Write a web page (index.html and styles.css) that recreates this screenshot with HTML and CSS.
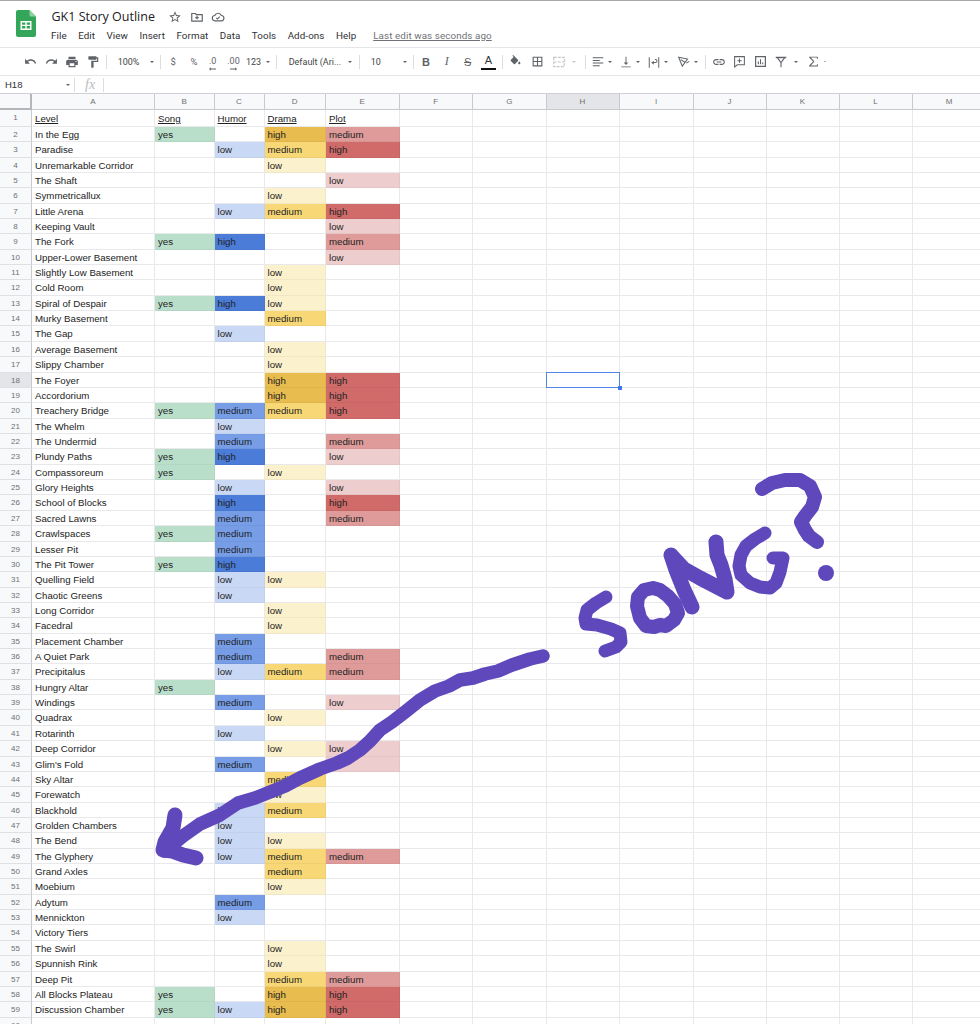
FILE: index.html
```html
<!DOCTYPE html>
<html>
<head>
	<meta charset="UTF-8">
	<title>GK1 Story Outline</title>
	<link rel="stylesheet" href="styles.css">
</head>
<body>
	<div class="page">
		<header class="title-bar">
			<svg class="logo" width="20" height="27" viewBox="0 0 20 27">
				<path d="M2 0h11.500l6.500 6.500v18.500a2 2 0 0 1-2 2h-16a2 2 0 0 1-2-2v-23a2 2 0 0 1 2-2z" fill="#34a65a"/>
				<path d="M13.500 0l6.500 6.500h-5a1.500 1.500 0 0 1-1.500-1.500z" fill="#8fd0a5"/>
				<path d="M4.500 11h11v9h-11zM6 12.500v2.200h3.300v-2.200zM10.700 12.500v2.200h3.300v-2.200zM6 16.100v2.400h3.300v-2.400zM10.700 16.100v2.400h3.300v-2.400z" fill="#fff" fill-rule="evenodd"/>
			</svg>
			<div class="title-main">
				<div class="title-row">
					<span class="doc-title">GK1 Story Outline</span>
					<svg class="title-icon" width="14" height="14" viewBox="0 0 24 24"><path fill="#5f6368" d="M22 9.240l-7.190-.62L12 2 9.190 8.630 2 9.240l5.460 4.730L5.820 21 12 17.270 18.180 21l-1.630-7.030L22 9.240zM12 15.400l-3.760 2.270 1-4.280-3.320-2.880 4.380-.38L12 6.100l1.710 4.040 4.380.38-3.320 2.880 1 4.280L12 15.400z"/></svg>
					<svg class="title-icon" width="14" height="14" viewBox="0 0 24 24"><path fill="none" stroke="#5f6368" stroke-width="2" d="M3 6h6l2 2h10v11h-18zM12 10v6M9 13h6"/></svg>
					<svg class="title-icon" width="14" height="14" viewBox="0 0 24 24"><path fill="none" stroke="#5f6368" stroke-width="2" d="M7 18.500a4.500 4.500 0 0 1-.5-9 6 6 0 0 1 11.300 0 4.500 4.500 0 0 1-.3 9zM9 13.500l2 2 4-4"/></svg>
				</div>
				<nav class="menu-row">
					<span>File</span>
					<span>Edit</span>
					<span>View</span>
					<span>Insert</span>
					<span>Format</span>
					<span>Data</span>
					<span>Tools</span>
					<span>Add-ons</span>
					<span>Help</span>
					<a class="last-edit">Last edit was seconds ago</a>
				</nav>
			</div>
		</header>

		<div class="toolbar">
			<button class="tb"><svg width="13" height="13" viewBox="0 0 24 24"><path d="M12.500 8c-2.650 0-5.050.99-6.900 2.600L2 7v9h9l-3.620-3.620c1.390-1.160 3.160-1.880 5.120-1.880 3.540 0 6.550 2.310 7.600 5.500l2.370-.78C21.080 11.030 17.150 8 12.500 8z"/></svg></button>
			<button class="tb"><svg width="13" height="13" viewBox="0 0 24 24"><path d="M18.400 10.600C16.550 8.990 14.150 8 11.500 8c-4.650 0-8.580 3.030-9.960 7.220L3.900 16c1.050-3.190 4.050-5.500 7.600-5.500 1.950 0 3.730.72 5.120 1.880L13 16h9V7l-3.600 3.600z"/></svg></button>
			<button class="tb"><svg width="14" height="14" viewBox="0 0 24 24"><path d="M19 8H5c-1.660 0-3 1.340-3 3v6h4v4h12v-4h4v-6c0-1.660-1.340-3-3-3zm-3 11H8v-5h8v5zm3-7c-.55 0-1-.45-1-1s.45-1 1-1 1 .45 1 1-.45 1-1 1zm-1-9H6v4h12V3z"/></svg></button>
			<button class="tb"><svg width="14" height="14" viewBox="0 0 24 24"><path d="M18 4V3c0-.55-.45-1-1-1H5c-.55 0-1 .45-1 1v4c0 .55.45 1 1 1h12c.55 0 1-.45 1-1V6h1v4H9v11c0 .55.45 1 1 1h2c.55 0 1-.45 1-1v-9h8V4h-3z"/></svg></button>
			<i class="sep sep-1"></i>
			<div class="drop drop-zoom"><span>100%</span><i class="caret"></i></div>
			<i class="sep"></i>
			<button class="tb tb-first tb-text">$</button>
			<button class="tb tb-text">%</button>
			<button class="tb tb-text tb-dec">.0<svg width="7" height="4" viewBox="0 0 8 4"><path d="M0 2l2-2v1.500h6v1h-6v1.500z"/></svg></button>
			<button class="tb tb-text tb-dec">.00<svg width="7" height="4" viewBox="0 0 8 4"><path d="M8 2l-2-2v1.500h-6v1h6v1.500z"/></svg></button>
			<div class="drop drop-num"><span>123</span><i class="caret"></i></div>
			<i class="sep"></i>
			<div class="drop drop-font"><span>Default (Ari...</span><i class="caret"></i></div>
			<i class="sep"></i>
			<div class="drop drop-size"><span>10</span><i class="caret"></i></div>
			<i class="sep"></i>
			<button class="tb tb-first tb-letter tb-bold">B</button>
			<button class="tb tb-letter tb-italic">I</button>
			<button class="tb tb-letter tb-strike">S</button>
			<button class="tb tb-letter tb-color">A</button>
			<i class="sep sep-2"></i>
			<button class="tb tb-first"><svg width="13" height="13" viewBox="0 0 24 24"><path d="M16.560 8.940L7.620 0 6.210 1.410l2.380 2.380-5.150 5.150c-.59.59-.59 1.540 0 2.120l5.500 5.500c.29.29.68.44 1.060.44s.77-.15 1.060-.44l5.500-5.500c.59-.58.59-1.530 0-2.120zM19 11.500s-2 2.170-2 3.500c0 1.100.9 2 2 2s2-.9 2-2c0-1.330-2-3.500-2-3.500z"/></svg></button>
			<button class="tb tb-borders"><svg width="13" height="13" viewBox="0 0 24 24"><path d="M3 3v18h18V3H3zm8 16H5v-6h6v6zm0-8H5V5h6v6zm8 8h-6v-6h6v6zm0-8h-6V5h6v6z"/></svg></button>
			<button class="tb tb-merge"><svg width="14" height="14" viewBox="0 0 24 24"><path fill="none" stroke="#c4c6c9" stroke-width="2" stroke-dasharray="5 2" d="M3 4h18v16h-18zM3 12h18"/></svg><i class="caret caret-off"></i></button>
			<i class="sep"></i>
			<button class="tb tb-caret tb-align"><svg width="14" height="14" viewBox="0 0 24 24"><path d="M3 4h18v1.600h-18zM3 8.500h12v1.600h-12zM3 13h18v1.600h-18zM3 17.500h12v1.600h-12z"/></svg><i class="caret"></i></button>
			<button class="tb tb-caret"><svg width="14" height="14" viewBox="0 0 24 24"><path d="M4 19.500h16v1.600h-16zM11.200 3h1.600v10h3.200l-4 4-4-4h3.200z"/></svg><i class="caret"></i></button>
			<button class="tb tb-caret"><svg width="14" height="14" viewBox="0 0 24 24"><path d="M3 3h1.700v18h-1.700zM19.300 3h1.700v18h-1.700zM8 11.200h6.500a1.800 1.800 0 0 0 0-3.600h-1v-1.700h1a3.500 3.500 0 0 1 0 7h-6.500zM11.500 9v6.500l-4-3.200z" transform="translate(0 1)"/></svg><i class="caret"></i></button>
			<button class="tb tb-caret tb-rotate"><svg width="14" height="14" viewBox="0 0 24 24"><path fill="none" stroke="#5f6368" stroke-width="1.800" d="M3 4l15 3-9 12zM6.500 8l7 4.500M16 14l5 -3"/></svg><i class="caret"></i></button>
			<i class="sep"></i>
			<button class="tb tb-first"><svg width="14" height="14" viewBox="0 0 24 24"><path d="M3.900 12c0-1.710 1.390-3.100 3.100-3.100h4V7H7c-2.760 0-5 2.240-5 5s2.240 5 5 5h4v-1.900H7c-1.710 0-3.100-1.390-3.100-3.100zM8 13h8v-2H8v2zm9-6h-4v1.900h4c1.710 0 3.100 1.390 3.100 3.100s-1.390 3.100-3.100 3.100h-4V17h4c2.760 0 5-2.240 5-5s-2.240-5-5-5z"/></svg></button>
			<button class="tb"><svg width="13" height="13" viewBox="0 0 24 24"><path fill="none" stroke="#5f6368" stroke-width="1.900" d="M3 3h18v15h-13l-5 4zM12 6.500v8M8 10.500h8"/></svg></button>
			<button class="tb"><svg width="13" height="13" viewBox="0 0 24 24"><path fill="none" stroke="#5f6368" stroke-width="2.200" d="M3 3h18v18h-18z"/><path d="M7 12h2v5h-2zM11 8h2v9h-2zM15 14h2v3h-2z"/></svg></button>
			<button class="tb tb-filter"><svg width="14" height="14" viewBox="0 0 24 24"><path d="M3 3h18v2.500h-18z"/><path fill="none" stroke="#5f6368" stroke-width="1.900" d="M6 5l6 8v8l0-8 6-8"/></svg><i class="caret"></i></button>
			<button class="tb tb-sum"><svg width="13" height="13" viewBox="0 0 24 24"><path d="M4 3h16v4h-1.800v-2.200h-11l6.500 7.200-6.500 7.200h11v-2.200h1.800v4h-16v-1.800l7.200-7.200-7.200-7.200z"/></svg><i class="caret caret-small"></i></button>
		</div>

		<div class="formula-bar">
			<span class="cell-ref">H18</span>
			<i class="caret"></i>
			<i class="sep"></i>
			<span class="fx">fx</span>
			<i class="sep"></i>
		</div>

		<div class="sheet" id="sheet"></div>

		<!-- pen scribble on top of the sheet -->
		<svg class="scribble" width="980" height="1024" viewBox="0 0 980 1024">
			<g fill="none" stroke="#5e48bc" stroke-linecap="round" stroke-linejoin="round">
				<path stroke-width="13.500" d="M543 656L530 659L512 665L498 671L485 674L473 678L460 680L449 686L435 691L420 700L405 712L392 722L380 730L370 741L360 750L348 758L337 763L320 769L300 778L285 786L270 792L255 798L238 803L220 815L200 824L183 836L172 845L165 851"/>
				<path stroke-width="15" d="M175 815L173 828L165 842L163 850L172 851L183 855L196 858"/>
				<path stroke-width="13" d="M606 597L596 603L587 610L585 618L586 624L597 625L611 629L620 633L621 642L616 647L605 651"/>
				<path stroke-width="14" d="M653 588L644 590L638 597L637 606L640 618L646 626L654 627L660 625L666 626L674 620L678 613L675 604L668 596L660 590Z"/>
				<path stroke-width="15" d="M671 555L676 570L684 590L692 607M671 555L684 569L700 578L727 592L725 579L721 565L717 555L716 542"/>
				<path stroke-width="13" d="M765 533L755 539L746 546L741 555L739 566L741 575L750 583L760 587L770 588L776 583L780 572L783 558L773 558"/>
				<path stroke-width="14" d="M762 489L772 483L785 480L800 480L810 486L815 497L812 507L805 516L801 522L805 530L809 536L817 542"/>
			</g>
			<circle cx="826" cy="573" r="8" fill="#5e48bc"/>
		</svg>
	</div>

	<script src="script.js"></script>
</body>
</html>
```

FILE: styles.css
```css
body {
	margin: 0;
	padding: 0;
	background-color: #ffffff;
}

.page {
	position: relative;
	width: 980px;
	height: 1024px;
	overflow: hidden;
	font-family: Roboto, "Liberation Sans", sans-serif;
	color: #202124;
}

/* title + menu */
.title-bar {
	display: flex;
	height: 46px;
	border-top: 1px solid #a8a8a8;
	border-bottom: 1px solid #e4e5e7;
}

.logo {
	margin: 9px 0 0 15.500px;
}

.title-main {
	margin-left: 15.500px;
}

.title-row {
	display: flex;
	align-items: center;
	height: 17px;
	margin-top: 7px;
}

.doc-title {
	font-family: "Open Sans", sans-serif;
	font-size: 12.500px;
	width: 116.500px;
	padding-left: 0.500px;
	color: #202124;
	white-space: nowrap;
}

.title-icon {
	margin-right: 7.500px;
}

.menu-row {
	display: flex;
	align-items: center;
	gap: 11.350px;
	margin-top: 3px;
	font-size: 9.800px;
	letter-spacing: 0.100px;
	height: 15px;
	color: #303134;
}

.last-edit {
	margin-left: 5.500px;
	color: #6f7276;
	text-decoration: underline;
	white-space: nowrap;
}

/* toolbar */
.toolbar {
	display: flex;
	align-items: center;
	height: 27px;
	padding-left: 20.500px;
	border-bottom: 1px solid #e4e5e7;
	font-size: 9px;
	color: #444746;
}

.tb {
	display: flex;
	align-items: center;
	justify-content: center;
	flex: none;
	width: 20.800px;
	height: 24px;
	padding: 0;
	border: none;
	background: none;
	font-family: inherit;
	font-size: 9.500px;
	color: #5f6368;
	fill: #5f6368;
}

.tb-first {
	margin-left: 2px;
}

.tb-dec {
	position: relative;
	font-size: 9px;
	padding-bottom: 2px;
	left: -2px;
}

.tb-dec svg {
	position: absolute;
	left: 7px;
	top: 17px;
}

.tb-letter {
	font-family: "Liberation Sans", sans-serif;
	font-size: 11px;
}

.tb-bold {
	font-weight: bold;
}

.tb-italic {
	font-style: italic;
	font-family: "Liberation Serif", serif;
	font-size: 12px;
}

.tb-strike {
	text-decoration: line-through;
}

.tb-color {
	position: relative;
	padding-bottom: 4px;
	color: #333;
}

.tb-color::after {
	content: "";
	position: absolute;
	left: 3px;
	right: 3px;
	bottom: 4px;
	height: 2px;
	background-color: #111;
}

.tb-borders {
	margin-left: 0.800px;
}

.tb-merge {
	width: 34px;
	justify-content: flex-start;
	gap: 6px;
	margin-left: 3.700px;
	padding-left: 1px;
	box-sizing: border-box;
}

.tb-caret {
	width: 28px;
	justify-content: flex-start;
	gap: 2.500px;
	box-sizing: border-box;
}

.tb-align {
	margin-left: 5px;
}

.tb-rotate {
	margin-left: 2px;
}

.tb-filter {
	width: 32.500px;
	justify-content: flex-start;
	gap: 6px;
	margin-left: 3.600px;
	box-sizing: border-box;
}

.tb-sum {
	width: 24px;
	justify-content: flex-start;
	gap: 4px;
	box-sizing: border-box;
}

.sep {
	display: block;
	flex: none;
	width: 1px;
	height: 14px;
	background-color: #dcdde0;
}

.sep-1 {
	margin-left: 2px;
}

.sep-2 {
	margin-left: 3.500px;
}

.drop {
	display: flex;
	align-items: center;
	justify-content: space-between;
	flex: none;
	box-sizing: border-box;
	height: 24px;
	white-space: nowrap;
}

.drop-zoom {
	width: 53px;
	padding: 0 6px 0 11px;
}

.drop-num {
	width: 29.800px;
	padding-right: 6px;
}

.drop-font {
	width: 82px;
	padding: 0 7px 0 12px;
}

.drop-size {
	width: 53px;
	padding: 0 6px 0 11px;
}

.caret {
	display: block;
	flex: none;
	width: 0;
	height: 0;
	border-left: 2.500px solid transparent;
	border-right: 2.500px solid transparent;
	border-top: 2.500px solid #5f6368;
}

.caret-off {
	border-top-color: #c4c6c9;
}

.caret-small {
	border-left-width: 1.500px;
	border-right-width: 1.500px;
	border-top-width: 1.500px;
}

/* formula bar */
.formula-bar {
	display: flex;
	align-items: center;
	height: 17px;
	border-bottom: 1px solid #cfd1d4;
	font-size: 9.500px;
}

.cell-ref {
	font-family: "Liberation Sans", sans-serif;
	width: 61px;
	padding-left: 5px;
	color: #303134;
}

.formula-bar .sep {
	margin-left: 4px;
}

.fx {
	font-family: "Liberation Serif", serif;
	font-style: italic;
	font-size: 14px;
	color: #b9bbbe;
	width: 28px;
	padding-left: 10px;
	box-sizing: border-box;
}

.formula-bar .fx + .sep {
	margin-left: 0;
}

/* the sheet */
.sheet {
	display: grid;
	grid-template-columns: 32px 123px 59.500px 50px 61.500px 73.500px 73.500px 73.500px 73px 74px 73px 73px 73px 74px;
	grid-template-rows: 16px 16.800px;
	grid-auto-rows: 15.360px;
	font-family: "Liberation Sans", sans-serif;
	font-size: 9.700px;
	color: #222222;
}

.cell {
	box-sizing: border-box;
	border-right: 1px solid #e9e9eb;
	border-bottom: 1px solid #e9e9eb;
	padding-left: 3px;
	line-height: 16.500px;
	white-space: nowrap;
	overflow: hidden;
}

.heading {
	text-decoration: underline;
	line-height: 17.500px;
}

.col-head, .row-head {
	padding: 0;
	text-align: center;
	font-size: 8px;
	line-height: 15.500px;
	color: #6e7073;
	background-color: #f8f9fa;
	border-right: 1px solid #c8cacd;
	border-bottom: 1px solid #c8cacd;
}

.row-head {
	border-bottom-color: #dfe0e2;
}

.corner {
	border-right: 2px solid #b4b6b9;
	border-bottom: 2px solid #b4b6b9;
}

.is-active {
	background-color: #e3e5e9;
}

.selected {
	position: relative;
	overflow: visible;
}

.selected::after {
	content: "";
	position: absolute;
	left: -1px;
	top: -1px;
	right: -1px;
	bottom: -1px;
	border: 1px solid #4f86ec;
}

.selected::before {
	content: "";
	position: absolute;
	right: -3px;
	bottom: -3px;
	width: 4px;
	height: 4px;
	background-color: #3f78e6;
	z-index: 1;
}

.song-yes { background-color: #b9dfca; }
.humor-low { background-color: #c9d9f5; }
.humor-medium { background-color: #769de6; }
.humor-high { background-color: #4a7cd8; }
.drama-low { background-color: #fcf1cd; }
.drama-medium { background-color: #f8d776; }
.drama-high { background-color: #e8bc4f; }
.plot-low { background-color: #eecdce; }
.plot-medium { background-color: #df9b99; }
.plot-high { background-color: #d06b69; }

.filled {
	border-right-color: rgba(0, 0, 0, 0.04);
	border-bottom-color: rgba(0, 0, 0, 0.04);
}

/* sits over the whole page, pen marks are free-hand */
.scribble {
	position: absolute;
	left: 0;
	top: 0;
	pointer-events: none;
}
```

FILE: script.js
```js
// level, song, humor, drama, plot
const rows = [
	["In the Egg", "yes", "", "high", "medium"],
	["Paradise", "", "low", "medium", "high"],
	["Unremarkable Corridor", "", "", "low", ""],
	["The Shaft", "", "", "", "low"],
	["Symmetricallux", "", "", "low", ""],
	["Little Arena", "", "low", "medium", "high"],
	["Keeping Vault", "", "", "", "low"],
	["The Fork", "yes", "high", "", "medium"],
	["Upper-Lower Basement", "", "", "", "low"],
	["Slightly Low Basement", "", "", "low", ""],
	["Cold Room", "", "", "low", ""],
	["Spiral of Despair", "yes", "high", "low", ""],
	["Murky Basement", "", "", "medium", ""],
	["The Gap", "", "low", "", ""],
	["Average Basement", "", "", "low", ""],
	["Slippy Chamber", "", "", "low", ""],
	["The Foyer", "", "", "high", "high"],
	["Accordorium", "", "", "high", "high"],
	["Treachery Bridge", "yes", "medium", "medium", "high"],
	["The Whelm", "", "low", "", ""],
	["The Undermid", "", "medium", "", "medium"],
	["Plundy Paths", "yes", "high", "", "low"],
	["Compassoreum", "yes", "", "low", ""],
	["Glory Heights", "", "low", "", "low"],
	["School of Blocks", "", "high", "", "high"],
	["Sacred Lawns", "", "medium", "", "medium"],
	["Crawlspaces", "yes", "medium", "", ""],
	["Lesser Pit", "", "medium", "", ""],
	["The Pit Tower", "yes", "high", "", ""],
	["Quelling Field", "", "low", "low", ""],
	["Chaotic Greens", "", "low", "", ""],
	["Long Corridor", "", "", "low", ""],
	["Facedral", "", "", "low", ""],
	["Placement Chamber", "", "medium", "", ""],
	["A Quiet Park", "", "medium", "", "medium"],
	["Precipitalus", "", "low", "medium", "medium"],
	["Hungry Altar", "yes", "", "", ""],
	["Windings", "", "medium", "", "low"],
	["Quadrax", "", "", "low", ""],
	["Rotarinth", "", "low", "", ""],
	["Deep Corridor", "", "", "low", "low"],
	["Glim's Fold", "", "medium", "", "low"],
	["Sky Altar", "", "", "medium", ""],
	["Forewatch", "", "", "low", ""],
	["Blackhold", "", "low", "medium", ""],
	["Grolden Chambers", "", "low", "", ""],
	["The Bend", "", "low", "low", ""],
	["The Glyphery", "", "low", "medium", "medium"],
	["Grand Axles", "", "", "medium", ""],
	["Moebium", "", "", "low", ""],
	["Adytum", "", "medium", "", ""],
	["Mennickton", "", "low", "", ""],
	["Victory Tiers", "", "", "", ""],
	["The Swirl", "", "", "low", ""],
	["Spunnish Rink", "", "", "low", ""],
	["Deep Pit", "", "", "medium", "medium"],
	["All Blocks Plateau", "yes", "", "high", "high"],
	["Discussion Chamber", "yes", "low", "high", "high"],
	["", "", "", "", ""]
];

const sheet = document.getElementById("sheet");
const letters = "ABCDEFGHIJKLM";
const kinds = ["song", "humor", "drama", "plot"];
const headings = ["Level", "Song", "Humor", "Drama", "Plot"];

function addCell(text, className) {
	const cell = document.createElement("div");
	cell.className = className;
	cell.textContent = text;
	sheet.appendChild(cell);
	return cell;
}

// column letters
addCell("", "cell col-head corner");
for (const letter of letters) {
	addCell(letter, "cell col-head" + (letter === "H" ? " is-active" : ""));
}

// row 1 has the underlined headings
addCell("1", "cell row-head");
for (let c = 0; c < 13; c++) {
	addCell(headings[c] || "", "cell" + (headings[c] ? " heading" : ""));
}

rows.forEach(function (row, i) {
	const number = i + 2;
	addCell(number, "cell row-head" + (number === 18 ? " is-active" : ""));
	addCell(row[0], "cell");
	kinds.forEach(function (kind, k) {
		const value = row[k + 1];
		addCell(value, value ? "cell filled " + kind + "-" + value : "cell");
	});
	for (let c = 5; c < 13; c++) {
		addCell("", "cell" + (number === 18 && c === 7 ? " selected" : ""));
	}
});
```
